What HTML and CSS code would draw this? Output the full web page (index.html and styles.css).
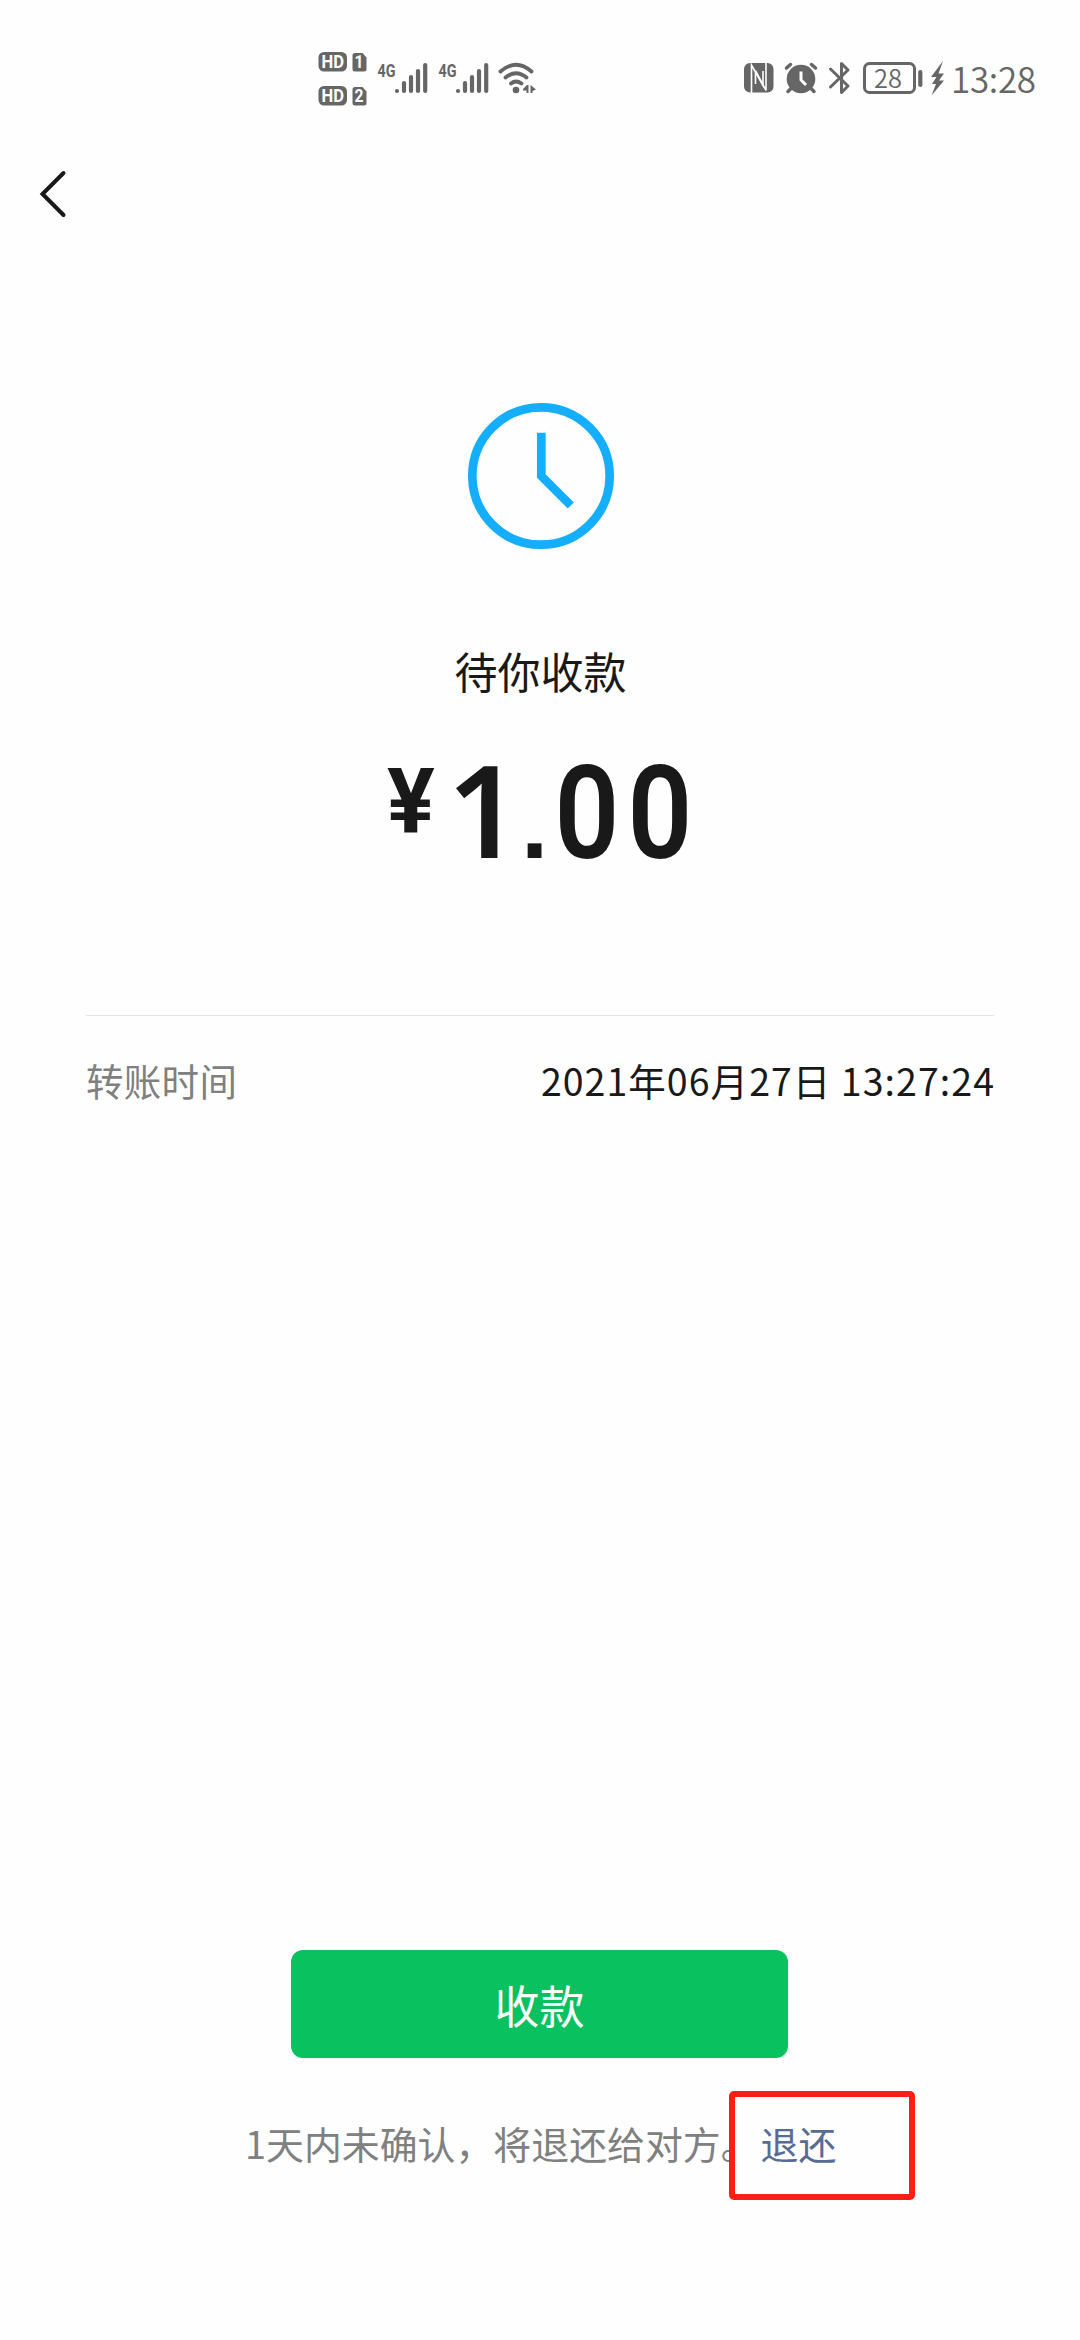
FILE: index.html
```html
<!DOCTYPE html>
<html lang="zh-CN">
<head>
<meta charset="utf-8">
<title>待你收款</title>
<link rel="stylesheet" href="styles.css">
</head>
<body>
<header class="status">
  <svg class="status-net" width="230" height="60" viewBox="310 48 230 60">
    <g class="ink">
      <rect x="318.500" y="52" width="28.500" height="19.500" rx="5.500"/>
      <path d="M355 53h7.500l4 4.500v11.500q0 2.500-2.500 2.500h-9q-2.500 0-2.500-2.500v-13.500q0-2.500 2.500-2.500z"/>
      <rect x="318.500" y="86" width="28.500" height="19.500" rx="5.500"/>
      <path d="M355 87h7.500l4 4.500v11.500q0 2.500-2.500 2.500h-9q-2.500 0-2.500-2.500v-13.500q0-2.500 2.500-2.500z"/>
    </g>
    <g class="badge-text">
      <text x="321.500" y="68" textLength="22.500" lengthAdjust="spacingAndGlyphs">HD</text>
      <text x="354.500" y="68" textLength="9" lengthAdjust="spacingAndGlyphs">1</text>
      <text x="321.500" y="102" textLength="22.500" lengthAdjust="spacingAndGlyphs">HD</text>
      <text x="354.500" y="102" textLength="9" lengthAdjust="spacingAndGlyphs">2</text>
    </g>
    <g class="net-text">
      <text x="377.500" y="76.500" textLength="18" lengthAdjust="spacingAndGlyphs">4G</text>
      <text x="438.500" y="76.500" textLength="18" lengthAdjust="spacingAndGlyphs">4G</text>
    </g>
    <path class="line bars" d="M397 91v0M404 83v8M411 77v14M418 71v20M425.200 65v26M458 91v0M465 83v8M472 77v14M479 71v20M486.200 65v26"/>
    <path class="line wifi" d="M500.500 71.500q15.500-13.500 31 0M505.500 77.500q10.500-8.500 21 0M511 83.500q5-4 10.500 0"/>
    <circle class="ink" cx="516" cy="90" r="3.300"/>
    <path class="ink" d="M528.500 85v8h-2v-2.500h-3.500v-1.500l4-4zM530.500 85l5.500 4.500-3.500 1.500v2h-2z"/>
  </svg>
  <div class="status-right">
    <svg width="184" height="40" viewBox="740 58 184 40">
      <rect class="ink" x="744" y="63" width="29.500" height="29.500" rx="6"/>
      <path class="nfc" d="M751.500 93V65l11.500 20.500V71"/>
      <path class="nfc" d="M755.500 84V70.500l10.500 20V63"/>
      <circle class="ink" cx="801" cy="79" r="14.300"/>
      <path class="line alarm" d="M786.500 68l4-3.500M815.500 68l-4-3.500M790.500 89l-2.500 2.500M811.500 89l2.500 2.500"/>
      <path class="hands" d="M801 71.500v8.500l5 5"/>
      <path class="line bt" d="M830.500 69l17.500 17-6.500 6.500v-29l6.500 6.500-17.500 17"/>
      <rect class="line" x="864.500" y="63.500" width="50" height="29" rx="5" stroke-width="3"/>
      <text class="level" x="874" y="87.500" textLength="28" lengthAdjust="spacingAndGlyphs">28</text>
      <path class="line bars" d="M920.300 72v13"/>
    </svg>
    <svg class="bolt" width="14" height="36" viewBox="930 60 14 36">
      <path class="ink" d="M943 61l-12 16h5.500l-4.500 7h4l-4.500 11.500 12.500-15h-5l5-7h-5.500z"/>
    </svg>
    <span class="time">13:28</span>
  </div>
</header>
<nav class="nav">
  <svg width="30" height="50" viewBox="38 169 30 50"><path class="back" d="M63.500 173L42.500 194l21 21"/></svg>
</nav>
<main class="summary">
  <svg class="clock" width="148" height="148" viewBox="0 0 148 148">
    <circle cx="74" cy="74" r="68.700"/>
    <path d="M74.300 30.700v43.300l29.500 29.500"/>
  </svg>
  <h1 class="title">待你收款</h1>
  <div class="amount"><span class="yen">¥</span><span class="one">1</span><span class="dot">.</span><span class="zero">0</span><span class="zero">0</span></div>
</main>
<section class="detail">
  <span class="label">转账时间</span>
  <span class="value">2021年06月27日 13:27:24</span>
</section>
<footer class="footer">
  <button class="accept">收款</button>
  <p class="hint">1天内未确认，将退还给对方。<a class="refund">退还<i class="frame"></i></a></p>
</footer>
</body>
</html>
```

FILE: styles.css
```css
* { box-sizing: border-box; }
body {
  margin: 0;
  width: 1080px;
  height: 2340px;
  display: flex;
  flex-direction: column;
  overflow: hidden;
  background: #fefefe;
  color: #191919;
  font-family: "Noto Sans CJK SC", sans-serif;
}
svg { display: block; flex: none; }
.status {
  height: 150px;
  padding: 48px 44px 0 310px;
  display: flex;
  justify-content: space-between;
  color: #666;
}
.status-right { display: flex; align-items: flex-start; padding-top: 10px; }
.bolt { margin: 2px 7px 0 6px; }
.time {
  width: 85px;
  font-size: 35px;
  font-weight: 350;
  line-height: 39px;
  letter-spacing: -.3px;
  white-space: nowrap;
}
.ink { fill: #666; }
.line { fill: none; stroke: #666; stroke-linecap: round; stroke-linejoin: round; }
.bars { stroke-width: 4.200px; }
.wifi { stroke-width: 3.800px; }
.alarm { stroke-width: 3.500px; }
.bt { stroke-width: 3px; }
.nfc { fill: none; stroke: #fefefe; stroke-width: 1.600px; }
.hands { fill: none; stroke: #fefefe; stroke-width: 3px; }
.badge-text { fill: #fefefe; font: 700 18px Roboto, sans-serif; }
.net-text { fill: #666; font: 700 18.500px Roboto, sans-serif; }
.level { fill: #666; font: 350 26px "Noto Sans CJK SC", sans-serif; }
.nav { height: 250px; padding: 19px 0 0 38px; }
.back { fill: none; stroke: #191919; stroke-width: 4px; stroke-linecap: round; }
.summary {
  height: 615px;
  display: flex;
  flex-direction: column;
  align-items: center;
  padding: 2px 0 0 1px;
}
.clock { fill: none; stroke: #15aefc; stroke-width: 8.700px; }
.title { margin: 88px 0 0; font-size: 43px; font-weight: 400; line-height: 64px; }
.amount {
  height: 130px;
  width: 307px;
  margin-top: 41px;
  display: flex;
  align-items: baseline;
  font-family: Roboto, sans-serif;
  font-size: 129px;
  font-weight: 600;
  line-height: 130px;
}
.amount span { display: block; flex: none; }
.yen {
  width: 60px;
  align-self: flex-start;
  font-size: 91px;
  font-weight: 700;
  line-height: 118px;
  transform: scaleX(.98);
  transform-origin: left;
}
.one { width: 74px; font-family: "Noto Sans", sans-serif; }
.dot { width: 29px; font-family: "Liberation Sans", sans-serif; font-size: 98px; }
.zero { width: 73px; transform: scaleX(.88); }
.detail {
  height: 935px;
  margin: 0 86px;
  padding-top: 34px;
  border-top: 1px solid #e3e3e3;
  display: flex;
  justify-content: space-between;
  font-size: 37.500px;
  line-height: 60px;
}
.label { color: #808080; letter-spacing: .3px; }
.value { letter-spacing: 1.050px; margin-right: -1px; }
.footer { display: flex; flex-direction: column; align-items: center; }
.accept {
  width: 497px;
  height: 108px;
  margin-right: 1px;
  border: 0;
  border-radius: 12px;
  background: #0ac160;
  color: #fff;
  font: 400 45px "Noto Sans CJK SC", sans-serif;
}
.hint {
  width: 590px;
  margin: 55px 0 0;
  font-size: 37.900px;
  line-height: 60px;
  color: #808080;
  white-space: nowrap;
}
.refund { position: relative; margin-left: 2px; color: #576b95; }
.frame {
  position: absolute;
  left: -32px;
  top: -24px;
  width: 186px;
  height: 109px;
  border: 6px solid #ff1e12;
  border-radius: 5px;
}
```
